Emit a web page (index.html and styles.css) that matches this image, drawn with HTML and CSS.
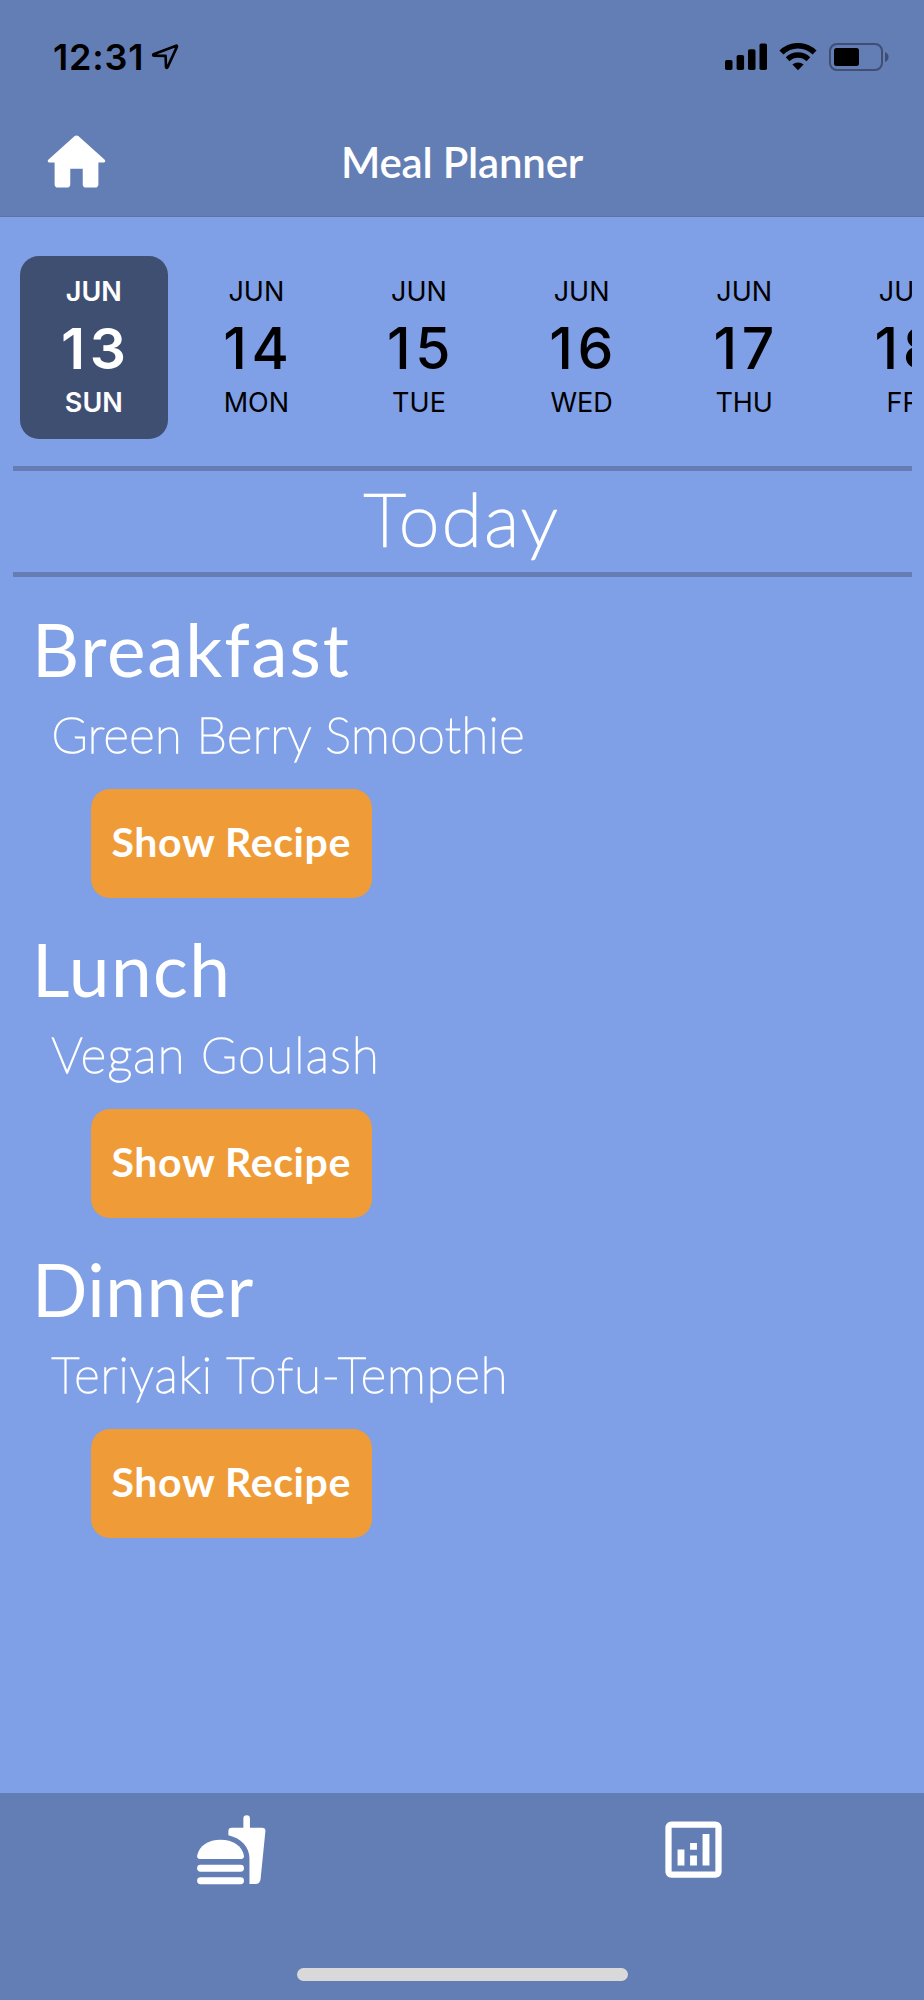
FILE: index.html
```html
<!DOCTYPE html>
<html>
<head>
<meta charset="utf-8">
<meta name="viewport" content="width=device-width, initial-scale=1">
<title>Meal Planner</title>
<link rel="stylesheet" href="styles.css">
</head>
<body>

<div class="status-bar">
  <span class="time">12:31</span>
  <svg class="location" width="28" height="30" viewBox="0 0 28 30">
    <path d="M25.2 2.7 L2.6 11.3 Q1.5 12.3 3 12.7 L14.6 12.9 L15 24.3 Q15.6 25.7 16.6 24.1 L26 3.6 Q26 2.5 25.2 2.7 Z" fill="none" stroke="#000" stroke-width="2.6" stroke-linejoin="round"/>
  </svg>
  <svg class="signal" width="42" height="27" viewBox="0 0 42 27">
    <rect x="0" y="17" width="7.5" height="10" rx="1.8"/>
    <rect x="11.6" y="12" width="7.5" height="15" rx="1.8"/>
    <rect x="23" y="6.3" width="7.5" height="20.7" rx="1.8"/>
    <rect x="34.5" y="0.5" width="7.5" height="26.5" rx="1.8"/>
  </svg>
  <svg class="wifi" width="38" height="28" viewBox="0 0 38 28">
    <path d="M2.4 9.6 A23.5 23.5 0 0 1 35.6 9.6" fill="none" stroke="#000" stroke-width="5.6"/>
    <path d="M8.6 16.2 A15 15 0 0 1 29.4 16.2" fill="none" stroke="#000" stroke-width="5.4"/>
    <path d="M19 27.2 L13.4 21.6 A8.4 8.4 0 0 1 24.6 21.6 Z"/>
  </svg>
  <svg class="battery" width="60" height="28" viewBox="0 0 60 28">
    <rect x="1" y="1" width="52" height="26" rx="7" fill="none" stroke="#3f4e72" stroke-width="2"/>
    <rect x="5" y="5" width="25" height="18" rx="2.5"/>
    <path d="M56 9 Q59.6 10.5 59.6 14 Q59.6 17.5 56 19 Z" fill="#3f4e72"/>
  </svg>
</div>

<div class="header">
  <svg class="home" width="75" height="75" viewBox="0 0 24 24">
    <path d="M10 19v-5h4v5c0 .55.45 1 1 1h3c.55 0 1-.45 1-1v-7h1.7c.46 0 .68-.57.33-.87L12.67 3.6c-.38-.34-.96-.34-1.34 0l-8.36 7.53c-.34.3-.13.87.33.87H5v7c0 .55.45 1 1 1h3c.55 0 1-.45 1-1z" fill="#fff"/>
  </svg>
  <h1 class="title">Meal Planner</h1>
</div>

<div class="content">
  <!-- scrolling date strip -->
  <div class="dates">
    <div class="date selected"><span>JUN</span><b>13</b><span>SUN</span></div>
    <div class="date"><span>JUN</span><b>14</b><span>MON</span></div>
    <div class="date"><span>JUN</span><b>15</b><span>TUE</span></div>
    <div class="date"><span>JUN</span><b>16</b><span>WED</span></div>
    <div class="date"><span>JUN</span><b>17</b><span>THU</span></div>
    <div class="date"><span>JUN</span><b>18</b><span>FRI</span></div>
  </div>

  <div class="day">Today</div>

  <div class="meal breakfast">
    <h2>Breakfast</h2>
    <p>Green Berry Smoothie</p>
    <button class="btn">Show Recipe</button>
  </div>
  <div class="meal lunch">
    <h2>Lunch</h2>
    <p>Vegan Goulash</p>
    <button class="btn">Show Recipe</button>
  </div>
  <div class="meal dinner">
    <h2>Dinner</h2>
    <p>Teriyaki Tofu-Tempeh</p>
    <button class="btn">Show Recipe</button>
  </div>
</div>

<div class="footer">
  <div class="tabs">
    <div class="tab">
      <svg width="75" height="75" viewBox="0 0 24 24" fill="#fff">
        <path d="M1.9 15 Q.9 15 1 14 C1.6 10.8 4.6 8.9 8.5 8.9 S15.4 10.8 16 14 Q16.1 15 15.1 15 Z"/>
        <rect x="1" y="16.9" width="15" height="2.2" rx="1.1"/>
        <rect x="1" y="20.9" width="15" height="2.2" rx="1.1"/>
        <path d="M11 7.4V6.1Q11 5 12.1 5H15.8V2.05a1.05 1.05 0 0 1 2.1 0V5H21.8Q22.9 5 22.85 6.1L21.3 21.5Q21.1 23.05 19.6 23.05H17.75V14.8C17.75 11.2 15.2 8.4 11 7.4z"/>
      </svg>
    </div>
    <div class="tab">
      <svg width="75" height="75" viewBox="0 0 24 24" fill="#fff">
        <path d="M19 3H5c-1.1 0-2 .9-2 2v14c0 1.1.9 2 2 2h14c1.1 0 2-.9 2-2V5c0-1.1-.9-2-2-2zm0 16H5V5h14v14z"/>
        <path d="M6.9 12h2.2v5.1H6.9zM10.9 13.9h2.2v3.2h-2.2zM10.9 9.9h2.2v2.2h-2.2zM14.9 7h2.2v10.1h-2.2z"/>
      </svg>
    </div>
  </div>
  <div class="home-indicator"></div>
</div>

</body>
</html>
```
FILE: styles.css
```css
* {box-sizing: border-box;}

body {
  margin: 0;
  width: 924px;
  height: 2000px;
  display: flex;
  flex-direction: column;
  background: #7f9fe6;
  color: white;
  font-family: Lato, sans-serif;
  overflow: hidden;
}

svg {
  display: block;
  flex: none;
}

/* Status bar */
.status-bar {
  height: 110px;
  flex: none;
  display: flex;
  align-items: flex-start;
  padding: 43px 35px 0 53px;
  background: #637eb4;
}

.time {
  font: 600 36px/28px Inter, sans-serif;
  letter-spacing: 0.8px;
  color: black;
  width: 98px;
}

.signal {
  margin-left: 545.5px;
}

.wifi {
  margin-left: 12.5px;
}

.battery {
  margin-left: 12px;
}

/* Title bar */
.header {
  height: 107px;
  flex: none;
  display: grid;
  grid-template-columns: 1fr auto 1fr;
  align-items: start;
  padding: 15px 39px 0 39px;
  background: #637eb4;
  border-bottom: 1px solid #5d74a2;
}

.title {
  margin: 13px 0 0;
  font-size: 42px;
  line-height: 48px;
  font-weight: 600;
  letter-spacing: -0.2px;
}

/* Main content */
.content {
  flex: 1;
  padding: 39px 12.5px 0;
}

.dates {
  display: flex;
  height: 210px;
  overflow: hidden;
}

.date {
  flex: none;
  width: 147.6px;
  height: 182.5px;
  margin: 0 7.5px;
  padding-top: 21px;
  border-radius: 19px;
  text-align: center;
  color: black;
  font-family: Inter, sans-serif;
}

.date span {
  display: block;
  font-size: 27px;
  line-height: 30px;
}

.date b {
  display: block;
  padding-top: 2px;
  font-size: 57px;
  line-height: 79px;
  font-weight: 500;
  letter-spacing: 4.5px;
  text-indent: 4px;
}

.date.selected {
  background: #3f4f71;
  color: white;
  font-weight: 600;
}

.date.selected b {
  font-weight: 600;
}

.day {
  height: 111px;
  border-top: 5px solid #657db3;
  border-bottom: 5px solid #657db3;
  text-align: center;
  font-size: 73px;
  line-height: 94px;
  font-weight: 100;
  letter-spacing: 2.8px;
  -webkit-text-stroke: 2.5px white;
}

/* Meals */
.meal {
  height: 320px;
  padding: 32px 0 0 19.5px;
}

.meal h2 {
  margin: 0;
  font-size: 73px;
  line-height: 80px;
  font-weight: 400;
}

.meal p {
  margin: 15px 0 25px 19.5px;
  font-size: 49px;
  line-height: 60px;
  font-weight: 100;
  -webkit-text-stroke: 1.5px white;
}

.breakfast h2 { letter-spacing: 1.75px; }
.lunch h2 { letter-spacing: 1.4px; }
.dinner h2 { letter-spacing: 0.5px; }
.breakfast p { letter-spacing: 0.5px; }
.lunch p { letter-spacing: 1.3px; }
.dinner p { letter-spacing: 1.05px; }

.btn {
  display: block;
  width: 280.5px;
  height: 108.5px;
  margin-left: 59px;
  padding: 0 0 3px;
  border: none;
  border-radius: 19px;
  background: #ef9c38;
  color: white;
  font: 700 41px Lato, sans-serif;
  letter-spacing: 0.6px;
  cursor: pointer;
}

/* Bottom tabs */
.footer {
  height: 207px;
  flex: none;
  display: flex;
  flex-direction: column;
  align-items: center;
  padding-top: 19px;
  background: #637eb4;
}

.tabs {
  display: flex;
  width: 100%;
}

.tab {
  flex: 1;
  display: flex;
  justify-content: center;
}

.home-indicator {
  width: 331px;
  height: 12.5px;
  margin-top: 81px;
  border-radius: 7px;
  background: #d9d9d9;
}
```
